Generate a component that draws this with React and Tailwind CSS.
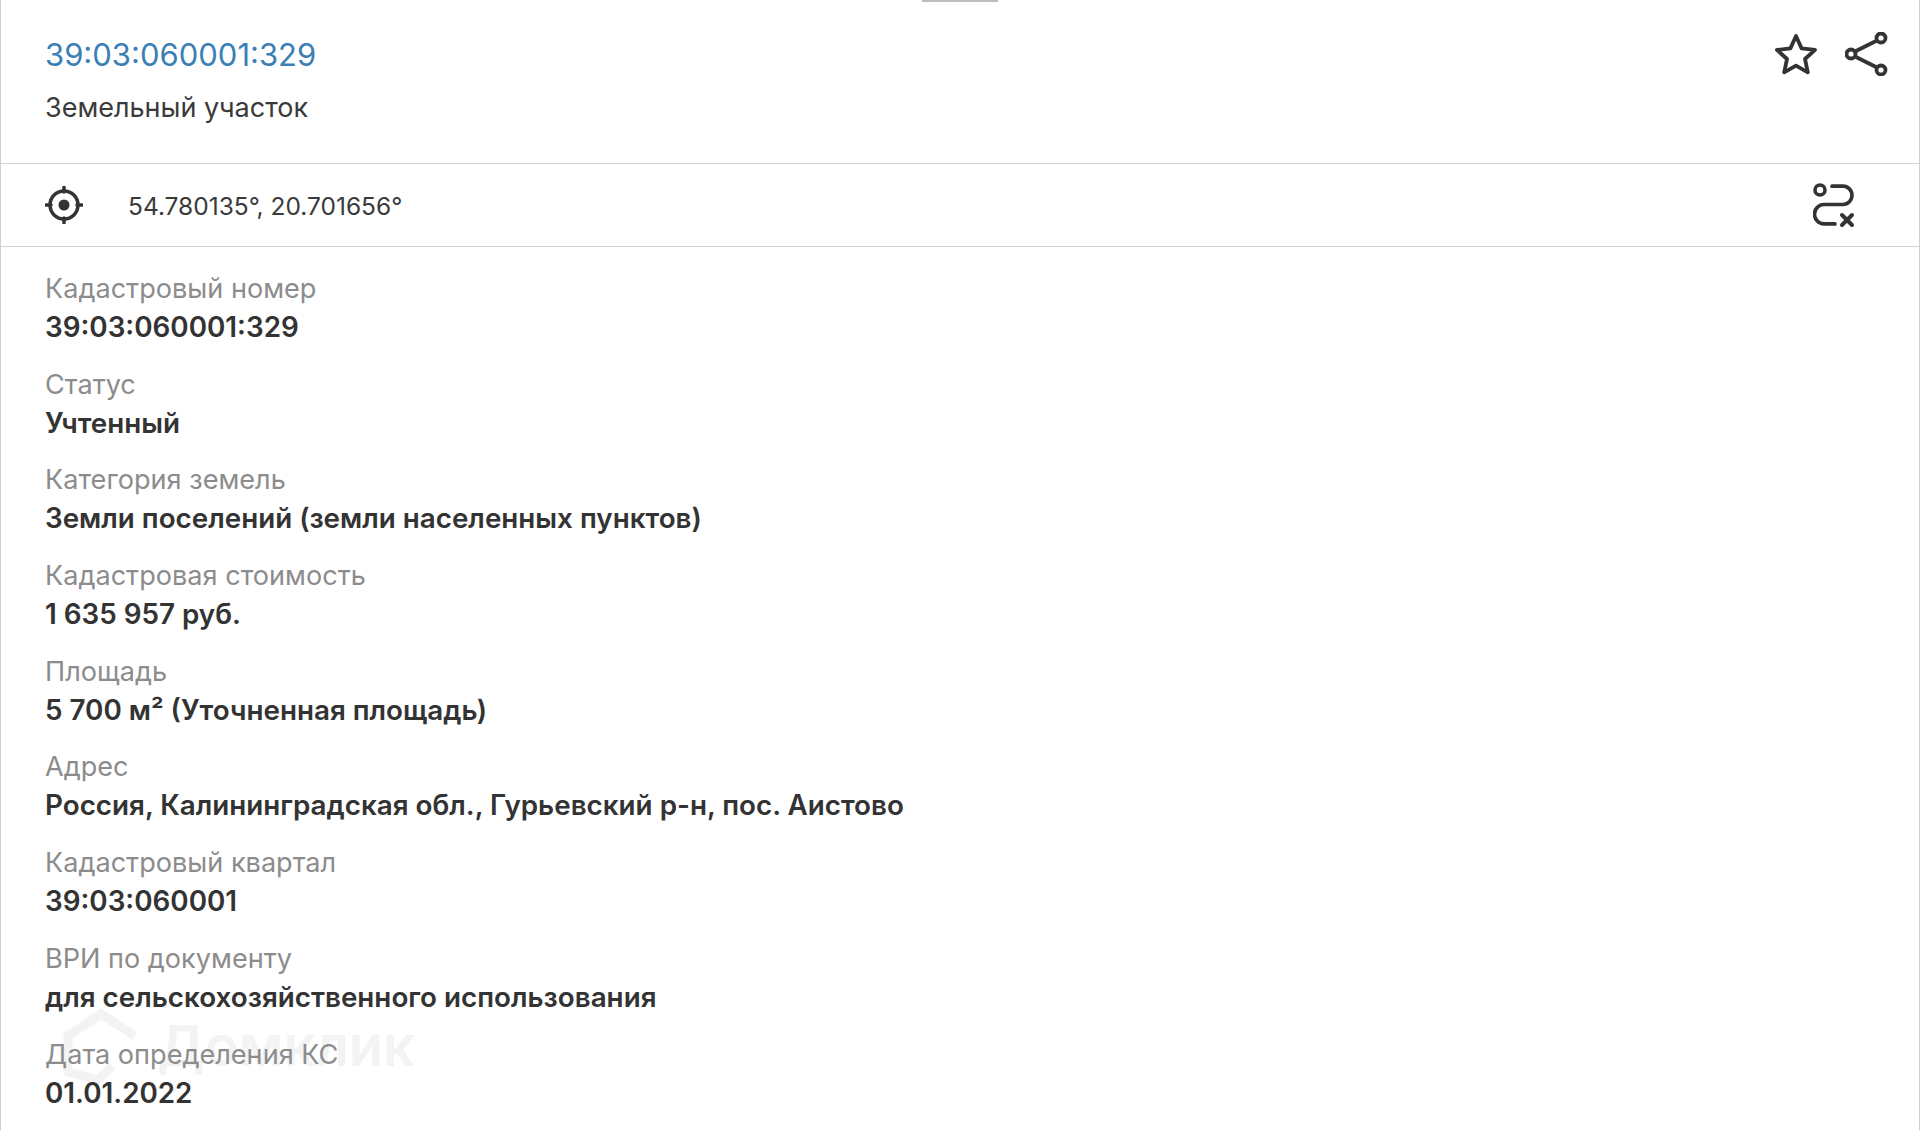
const rows = [
  { label: 'Кадастровый номер', value: '39:03:060001:329' },
  { label: 'Статус', value: 'Учтенный' },
  { label: 'Категория земель', value: 'Земли поселений (земли населенных пунктов)' },
  { label: 'Кадастровая стоимость', value: '1 635 957 руб.' },
  { label: 'Площадь', value: '5 700 м² (Уточненная площадь)' },
  { label: 'Адрес', value: 'Россия, Калининградская обл., Гурьевский р-н, пос. Аистово' },
  { label: 'Кадастровый квартал', value: '39:03:060001' },
  { label: 'ВРИ по документу', value: 'для сельскохозяйственного использования' },
  { label: 'Дата определения КС', value: '01.01.2022' },
]

function TargetIcon() {
  return (
    <svg width="38" height="38" viewBox="0 0 38 38" fill="none" stroke="#333" strokeWidth="3.500" strokeLinecap="round">
      <circle cx="19" cy="19" r="14" />
      <circle cx="19" cy="19" r="5.500" fill="#333" stroke="none" />
      <path d="M19 1v5M19 32v5M1 19h5M32 19h5" />
    </svg>
  )
}

function StarIcon() {
  return (
    <svg width="44" height="44" viewBox="0 0 44 44" fill="none" stroke="#333" strokeWidth="3.800" strokeLinejoin="round">
      <path d="M22 4l5.600 12.400 13.400 1.500-10 9.100 2.800 13.300L22 33.600l-11.800 6.700L13 27 3 17.900l13.400-1.500z" />
    </svg>
  )
}

function ShareIcon() {
  return (
    <svg width="44" height="44" viewBox="0 0 44 44" fill="none" stroke="#333" strokeWidth="3.800">
      <circle cx="36" cy="6" r="4.500" />
      <circle cx="6" cy="22" r="4.500" />
      <circle cx="36" cy="38" r="4.500" />
      <path d="M32 8.500L10 19.500M10 24.500L32 35.500" />
    </svg>
  )
}

function RouteOffIcon() {
  return (
    <svg width="42" height="46" viewBox="0 0 42 46" fill="none" stroke="#333" strokeWidth="3.600" strokeLinecap="round">
      <circle cx="7" cy="7" r="5" />
      <path d="M19 7h11a9 9 0 0 1 0 18H11a9.500 9.500 0 0 0 0 19h11" transform="translate(0 -4) scale(1 1.020)" />
      <path d="M29 32l10 10M39 32L29 42" strokeWidth="4" />
    </svg>
  )
}

function Watermark() {
  return (
    <div className="absolute left-[62px] top-[1008px] flex items-center gap-[18px] pointer-events-none">
      <svg width="76" height="76" viewBox="0 0 76 76" fill="none" stroke="#f3f3f3" strokeWidth="9">
        <path d="M72 28L38 6 5 28v36l30 8 14-14" />
      </svg>
      <span className="text-[56px] font-semibold leading-none text-[#f3f3f3]">Домклик</span>
    </div>
  )
}

export default function App() {
  return (
    <div className="relative h-[1130px] overflow-hidden bg-white border-x border-x-[#cfcfcf] font-['Inter',sans-serif] text-[#333]">
      <div className="absolute left-[921px] top-0 w-[76px] h-[2px] bg-[#bdbdbd]" />

      <header className="h-[164px] border-b border-[#d2d2d2] pl-[44px] pr-[30px] flex justify-between">
        <div className="pt-[33px]">
          <div className="text-[31px] leading-[44px] text-[#3b7fb5]">39:03:060001:329</div>
          <div className="mt-[11px] text-[27px] leading-[40px] text-[#3a3a3a]">Земельный участок</div>
        </div>
        <div className="flex gap-[27px] pt-[32px] items-start">
          <StarIcon />
          <ShareIcon />
        </div>
      </header>

      <div className="h-[83px] border-b border-[#d2d2d2] pl-[44px] pr-[64px] flex items-center justify-between">
        <div className="flex items-center gap-[45px]">
          <TargetIcon />
          <span className="pt-[2px] text-[24.500px] text-[#3a3a3a]">54.780135°, 20.701656°</span>
        </div>
        <div className="pt-[2px]">
          <RouteOffIcon />
        </div>
      </div>

      <Watermark />

      <div className="relative pl-[44px] pt-[22px]">
        {rows.map(row => (
          <div key={row.label} className="h-[95.7px]">
            <div className="text-[27.100px] leading-[40px] text-[#8c8c8c]">{row.label}</div>
            <div className="text-[27.800px] leading-[36px] font-semibold text-[#333]">{row.value}</div>
          </div>
        ))}
      </div>
    </div>
  )
}
